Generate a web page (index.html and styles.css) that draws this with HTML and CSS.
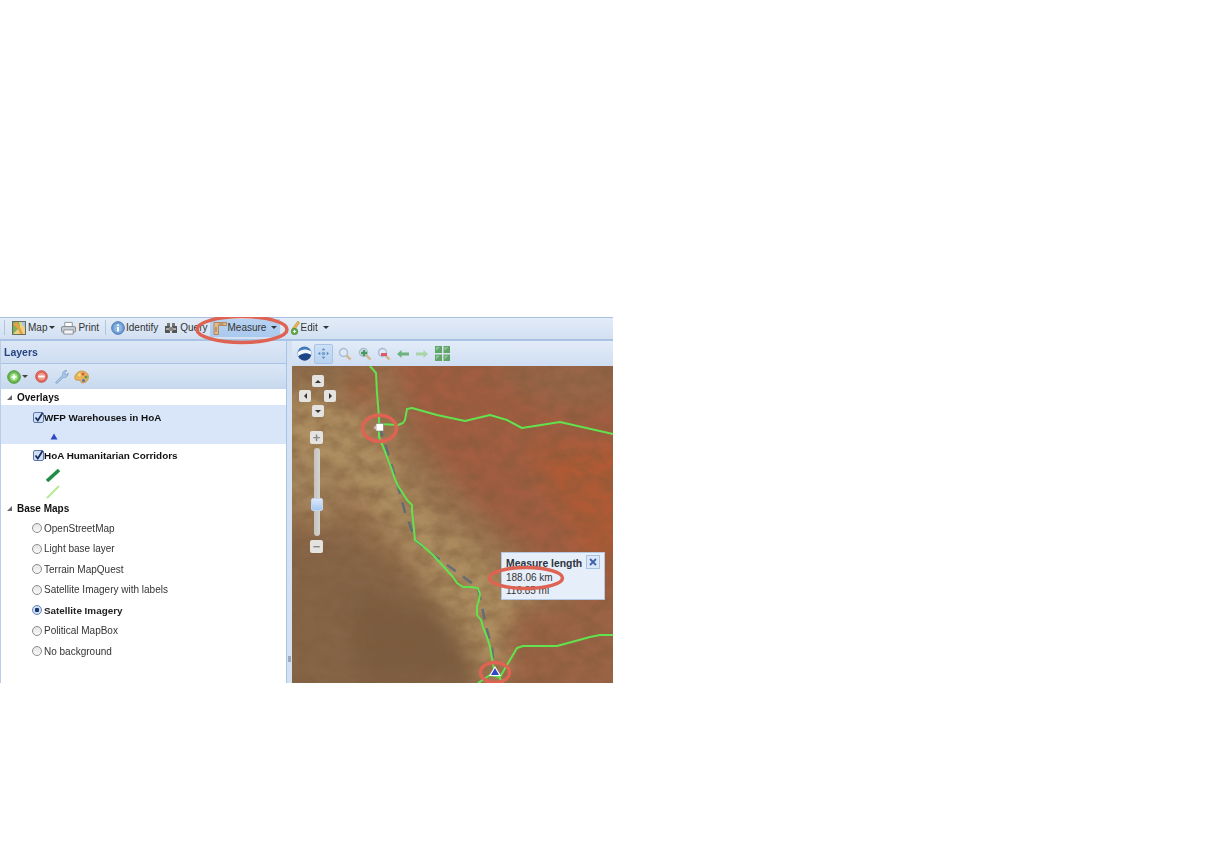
FILE: index.html
```html
<!DOCTYPE html>
<html lang="en">
<head>
<meta charset="utf-8">
<title>Measure length</title>
<link rel="stylesheet" href="styles.css">
</head>
<body>
<div class="app">
  <div class="toolbar">
    <span class="sep sep-a"></span>
    <div class="tb tb-map">
      <svg class="ic14" viewBox="0 0 14 14"><rect x=".5" y=".5" width="13" height="13" fill="#e8d28a" stroke="#6b6b5a"/><path d="M1 1l6 0 1 5-7 7z" fill="#7fb05a"/><path d="M1 3l5 5 2 5h3L8 6 5 1z" fill="#e8a040"/><path d="M9 1h4v6z" fill="#9cc4e8"/></svg>
      <span>Map</span><i class="caret"></i>
    </div>
    <div class="tb tb-print">
      <svg class="ic16" viewBox="0 0 16 14"><path d="M4 1h8v5H4z" fill="#fff" stroke="#8a9098"/><rect x=".5" y="5.500" width="15" height="6" rx="1.500" fill="#c9ced4" stroke="#7d838b"/><path d="M3 9h10v4.500H3z" fill="#f4f4f4" stroke="#8a9098"/></svg>
      <span>Print</span>
    </div>
    <span class="sep sep-b"></span>
    <div class="tb tb-identify">
      <svg class="ic14" viewBox="0 0 14 14"><circle cx="7" cy="7" r="6.300" fill="#6f9fd6" stroke="#4b76ad"/><circle cx="7" cy="7" r="4" fill="#8db8e6"/><path d="M6 3.500h2v1.500H6zM6 6h2v4.500H6z" fill="#fff"/></svg>
      <span>Identify</span>
    </div>
    <div class="tb tb-query">
      <svg class="ic14" viewBox="0 0 14 12"><path d="M3 1h3v3H3zM8 1h3v3H8z" fill="#777"/><path d="M1 4h5v7H1zM8 4h5v7H8z" fill="#555"/><rect x="5" y="5" width="4" height="4" fill="#888"/><path d="M2 6h3v2H2zM9 6h3v2H9z" fill="#aaa"/></svg>
      <span>Query</span>
    </div>
    <div class="tb tb-measure">
      <svg class="ic14" viewBox="0 0 14 14"><path d="M1 1.500h12.500v3H5.500v9H1z" fill="#e4b98a" stroke="#a57a4c" stroke-width=".8"/><path d="M5.500 3h5M3 6v5" stroke="#8b5f33" stroke-width=".8"/></svg>
      <span>Measure</span><i class="caret caret-split"></i>
    </div>
    <div class="tb tb-edit">
      <svg class="ic-edit" viewBox="0 0 10 15"><path d="M8 1L2 9l2 1.500L9.500 3z" fill="#e9b949" stroke="#b9862b" stroke-width=".6"/><circle cx="4.500" cy="11.500" r="3.200" fill="#68b04a" stroke="#3f8030" stroke-width=".7"/><path d="M3 11.500h3M4.500 10v3" stroke="#fff" stroke-width=".9"/></svg>
      <span>Edit</span><i class="caret caret-edit"></i>
    </div>
  </div>

  <div class="panes">
    <aside class="layers">
      <div class="layers-title">Layers</div>
      <div class="layers-tools">
        <svg class="ic-add" viewBox="0 0 14 14"><circle cx="7" cy="7" r="6.300" fill="#67b84f" stroke="#4f9a3b"/><circle cx="7" cy="7" r="3.800" fill="#a4dc8a"/><path d="M4.500 7h5M7 4.500v5" stroke="#fff" stroke-width="1.600"/></svg>
        <i class="caret caret-add"></i>
        <svg class="ic-remove" viewBox="0 0 14 14"><circle cx="7" cy="7" r="6.300" fill="#e4695c" stroke="#c9584c"/><circle cx="7" cy="7" r="3.800" fill="#f0a096"/><path d="M3.500 7h7" stroke="#fff" stroke-width="2"/></svg>
        <svg class="ic-wrench" viewBox="0 0 15 15"><path d="M1.500 13.500L8.500 6.200C8 3.500 10 1 13 1.500L10.800 3.700l.6 1.800 1.800.5L14 4c.5 3-2 5-4.700 4.500L3 14.500z" fill="#a9c5e8" stroke="#7d9cc4" stroke-width=".7"/></svg>
        <svg class="ic-palette" viewBox="0 0 15 14"><path d="M7.500 1C12 1 14.500 4 14.500 7S12 13 8.500 13c-2 0-1.500-2-2.500-2.500C4.500 10 1.500 11 .8 8.500.2 5.500 3.500 1 7.500 1z" fill="#e9b25c" stroke="#c28a3c" stroke-width=".7"/><circle cx="9" cy="4" r="1.500" fill="#d8573f"/><circle cx="12" cy="7" r="1.500" fill="#5d9a45"/><circle cx="9.500" cy="10.500" r="1.500" fill="#4a73b8"/><circle cx="5.500" cy="5" r="1.400" fill="#f4e27a"/></svg>
      </div>
      <div class="tree">
        <div class="group"><i class="twist"></i>Overlays</div>
        <div class="layer selected">
          <div class="row-check">
            <svg class="check" viewBox="0 0 11 11"><rect x=".5" y=".5" width="10" height="10" rx="1.500" fill="#cfe0f6" stroke="#5d7aa5"/><path d="M2.500 5.500l2.300 3L9.500 1" fill="none" stroke="#182c58" stroke-width="1.700"/></svg>
            <b>WFP Warehouses in HoA</b>
          </div>
          <div class="sym sym-tri"><svg viewBox="0 0 8 7" class="tri"><path d="M4 .5L7.500 6.500H.5z" fill="#2f47c4"/></svg></div>
        </div>
        <div class="layer layer-lines">
          <div class="row-check">
            <svg class="check" viewBox="0 0 11 11"><rect x=".5" y=".5" width="10" height="10" rx="1.500" fill="#cfe0f6" stroke="#5d7aa5"/><path d="M2.500 5.500l2.300 3L9.500 1" fill="none" stroke="#182c58" stroke-width="1.700"/></svg>
            <b>HoA Humanitarian Corridors</b>
          </div>
          <div class="sym"><svg viewBox="0 0 14 14" class="line"><path d="M1 13L13 2" stroke="#1f8d44" stroke-width="3.500"/></svg></div>
          <div class="sym"><svg viewBox="0 0 14 14" class="line"><path d="M1 13L13 1" stroke="#b4ea96" stroke-width="2"/></svg></div>
        </div>
        <div class="group group-base"><i class="twist"></i>Base Maps</div>
        <div class="radio"><i class="dot"></i>OpenStreetMap</div>
        <div class="radio"><i class="dot"></i>Light base layer</div>
        <div class="radio"><i class="dot"></i>Terrain MapQuest</div>
        <div class="radio"><i class="dot"></i>Satellite Imagery with labels</div>
        <div class="radio"><i class="dot on"></i><b>Satellite Imagery</b></div>
        <div class="radio"><i class="dot"></i>Political MapBox</div>
        <div class="radio"><i class="dot"></i>No background</div>
      </div>
    </aside>
    <div class="splitter"><i class="grip"></i></div>
    <section class="mapwrap">
      <div class="maptools">
        <svg class="m-globe" viewBox="0 0 16 16"><circle cx="8" cy="8" r="7.500" fill="#3f76bd"/><path d="M1 6.500C5 3 10 3 15 5.500 15.500 7 15.500 8 15 9.500 10 6.500 6 7.500 1.500 11 .7 9.500.7 8 1 6.500z" fill="#f2f6fb"/><path d="M1.500 11C6 7.500 10 7 15 9.500 14 13 11 15.500 8 15.500S3 13.500 1.500 11z" fill="#1f4585"/></svg>
        <div class="m-pan"><svg viewBox="0 0 14 14"><path d="M7 1l2 2.500H5zM7 13l2-2.500H5zM1 7l2.500-2v4zM13 7l-2.500-2v4z" fill="#5d8ac0"/><circle cx="7" cy="7" r="2" fill="#7ea6d4"/></svg></div>
        <svg class="m-ic" viewBox="0 0 14 14"><circle cx="5.500" cy="5.500" r="4" fill="#dfe9f5" stroke="#a9bcd3" stroke-width="1.400"/><path d="M8.500 8.500l4 4" stroke="#d2b48a" stroke-width="2.400"/></svg>
        <svg class="m-ic" viewBox="0 0 14 14"><circle cx="5.500" cy="5.500" r="4" fill="#dfe9f5" stroke="#a9bcd3" stroke-width="1.400"/><path d="M8.500 8.500l4 4" stroke="#d2b48a" stroke-width="2.400"/><path d="M3 6h6M6 3v6" stroke="#4a9a5a" stroke-width="2.400"/></svg>
        <svg class="m-ic" viewBox="0 0 14 14"><circle cx="5.500" cy="5.500" r="4" fill="#dfe9f5" stroke="#a9bcd3" stroke-width="1.400"/><path d="M8.500 8.500l4 4" stroke="#d2b48a" stroke-width="2.400"/><path d="M4 7.500h6" stroke="#e2566a" stroke-width="3"/></svg>
        <svg class="m-ic m-arrow" viewBox="0 0 14 10"><path d="M1 5l4.500-4v2.500H13v3H5.500V9z" fill="#6cb27a"/></svg>
        <svg class="m-ic m-arrow" viewBox="0 0 14 10"><path d="M13 5L8.500 1v2.500H1v3h7.500V9z" fill="#a8d4a8"/></svg>
        <svg class="m-grid" viewBox="0 0 15 15"><path d="M0 0h7v7H0zM8.500 0h6.500v7H8.500zM0 8.500h7V15H0zM8.500 8.500h6.500V15H8.500z" fill="#5fa56a"/><path d="M1 1h4L1 5zM9.500 1h4l-4 4zM1 9.500h4l-4 4zM9.500 9.500h4l-4 4z" fill="#8fc492"/></svg>
      </div>
      <div class="map">
        <svg class="terrain" viewBox="292 366 321 317" preserveAspectRatio="none">
          <defs>
            <filter id="soft" x="-20%" y="-20%" width="140%" height="140%"><feGaussianBlur stdDeviation="11"/></filter>
            <filter id="grain" x="0" y="0" width="100%" height="100%">
              <feTurbulence type="fractalNoise" baseFrequency=".06 .08" numOctaves="5" seed="7"/>
              <feColorMatrix values="0 0 0 0 .2  0 0 0 0 .1  0 0 0 0 .04  .9 0 0 0 -.27"/>
            </filter>
          </defs>
          <rect x="292" y="366" width="321" height="317" fill="#9a7350"/>
          <g filter="url(#soft)">
            <path d="M385 340H650V650L540 565 470 500 420 440z" fill="#a35d40"/>
            <path d="M530 450L640 440V570L590 560z" fill="#b05a36"/>
            <path d="M480 370L640 340V400L560 410z" fill="#98654a"/>
            <path d="M280 340H365V400L330 400 280 380z" fill="#906e4e"/>
            <path d="M350 372h22v34h-22z" fill="#a4623f"/>
            <path d="M300 385L370 420 420 500 525 590 565 650 505 700 440 600 400 540 330 470 270 440z" fill="#ad8e60"/>
            <path d="M270 530L350 530 440 600 480 700H270z" fill="#866547"/>
            <path d="M350 590L450 620 480 680H360z" fill="#7b5b40"/>
            <path d="M510 610L650 590V710H500z" fill="#9b6344"/>
            <path d="M270 430L335 480V520L270 500z" fill="#a3855d"/>
          </g>
          <rect x="292" y="366" width="321" height="317" filter="url(#grain)"/>
          <path class="measure-line" d="M379 426L387 450 397 483 405 512 410 525 415 540 433 555 457 572 478 588 482 607 487 630 492 647 494 670"/>
          <g class="road">
            <path d="M370 366L376 373 377 393 378 405 379 417 379 437 384 449 387 457 392 470 394 477 398 486 402 492 407 500 412 505 412 512 413 520 415 540 424 547 433 555 443 566 453 577 457 583 463 587 470 587 478 588 480 594 479 600 477 606 477 615 481 620 483 627 487 637 490 647 492 658 494 670 503 683"/>
            <path d="M379 424L398 425 403 423 405 420 407 409 412 408 437 415 465 421 490 415 507 420 522 428 560 422 613 434"/>
            <path d="M478 683L490 675 500 677 507 665 517 648 523 646 557 646 590 637 600 635 613 635"/>
          </g>
          <path d="M380 423l-5 3-1 2 2 2 4 0z" fill="#ddd" />
          <rect x="376" y="423.500" width="7.500" height="7.500" fill="#fff" stroke="#777" stroke-width=".6"/>
          <path d="M489 676L495 666 501 676z" fill="#fff"/>
          <path d="M491 675L495 668 499 675z" fill="#2f47c4"/>
        </svg>
        <div class="pan">
          <span class="zb"><i class="g-up"></i></span>
          <div class="pan-mid">
            <span class="zb"><i class="g-left"></i></span>
            <span class="zb"><i class="g-right"></i></span>
          </div>
          <span class="zb"><i class="g-down"></i></span>
        </div>
        <div class="zoom">
          <span class="zb zoom-btn">+</span>
          <div class="slider"><span class="thumb"></span></div>
          <span class="zb zoom-btn">&minus;</span>
        </div>
        <div class="popup">
          <div class="popup-title"><b>Measure length</b><span class="close"><svg viewBox="0 0 8 8"><path d="M1 1l6 6M7 1L1 7" stroke="#3f62a8" stroke-width="1.800"/></svg></span></div>
          <div class="popup-val">188.06 km</div>
          <div class="popup-val">116.85 mi</div>
        </div>
      </div>
    </section>
  </div>
  <svg class="marks" viewBox="0 317 613 366">
    <ellipse cx="242" cy="329.500" rx="45" ry="13"/>
    <ellipse cx="379.500" cy="428.300" rx="17" ry="13"/>
    <ellipse cx="526" cy="578" rx="36.500" ry="10.500"/>
    <ellipse cx="495" cy="672.500" rx="14.500" ry="10"/>
  </svg>
</div>
</body>
</html>
```
FILE: styles.css
```css
* { box-sizing: border-box; }
html, body { margin: 0; padding: 0; background: #fff; }
body { font-family: "Liberation Sans", Arial, sans-serif; font-size: 10px; color: #222; }

.app { position: relative; width: 613px; height: 366px; margin-top: 317px; display: flex; flex-direction: column; overflow: hidden; filter: blur(.45px); }

/* top toolbar */
.toolbar { height: 24px; flex: none; display: flex; align-items: center; padding-bottom: 2px; border-top: 1px solid #a8c0e0; border-bottom: 2px solid #a9c3e4; background: linear-gradient(#e3ecf8, #d2e0f2); color: #333; }
.tb { display: flex; align-items: center; height: 20px; }
.tb span { white-space: nowrap; }
.sep { width: 1px; height: 15px; background: #b3c6df; flex: none; }
.sep-a { margin-left: 4px; margin-right: 7px; }
.sep-b { margin-left: 6px; margin-right: 5px; }
.ic14 { width: 14px; height: 14px; flex: none; margin-right: 2px; }
.ic16 { width: 15px; height: 14px; flex: none; margin-right: 2px; }
.ic-edit { width: 10px; height: 15px; flex: none; margin-right: 1px; }
.caret { display: block; width: 0; height: 0; margin-left: 2px; border: 3px solid transparent; border-top-color: #333; border-bottom-width: 0; }
.tb-print { margin-left: 6px; }
.tb-identify .ic14 { margin-right: 1px; }
.tb-query { margin-left: 6px; }
.tb-measure { margin-left: 2px; width: 70px; padding-left: 3px; background: linear-gradient(#b8d3f1, #a9c9ee); height: 18px; }
.tb-measure .ic14 { margin-right: 1px; }
.tb-edit { margin-left: 10px; }
.caret-split { margin-left: 5px; }
.caret-edit { margin-left: 5px; }

/* panes */
.panes { flex: 1; display: flex; min-height: 0; }
.layers { width: 287px; flex: none; display: flex; flex-direction: column; border-left: 1px solid #b9cde8; border-right: 1px solid #a9c3e4; background: #fff; }
.layers-title { height: 23px; flex: none; padding-left: 3px; display: flex; align-items: center; font-size: 10.500px; font-weight: bold; color: #27457f; background: linear-gradient(#dce7f6, #cfdef2); border-bottom: 1px solid #a9c3e4; }
.layers-tools { height: 25px; flex: none; display: flex; align-items: center; padding-left: 6px; background: linear-gradient(#dbe7f6, #c7d8ee); }
.ic-add { width: 14px; height: 14px; }
.caret-add { margin-left: 1px; border-top-color: #444; }
.ic-remove { width: 13px; height: 13px; margin-left: 7px; }
.ic-wrench { width: 15px; height: 15px; margin-left: 6px; }
.ic-palette { width: 15px; height: 14px; margin-left: 5px; }

.tree { flex: 1; color: #222; }
.tree b { font-size: 9.900px; }
.group { height: 16px; display: flex; align-items: center; padding-left: 6px; font-weight: bold; color: #111; }
.twist { width: 0; height: 0; margin-right: 5px; border-style: solid; border-width: 0 0 5px 5px; border-color: transparent transparent #666 transparent; }
.layer { padding-left: 32px; }
.selected { background: #d9e6f9; }
.layer.selected { height: 39px; }
.row-check { height: 24px; display: flex; align-items: center; color: #111; }
.check { width: 11px; height: 11px; flex: none; }
.sym { display: flex; align-items: center; height: 17px; padding-left: 13px; }
.sym-tri { height: 15px; padding-left: 17px; }
.tri { width: 8px; height: 7px; }
.line { width: 14px; height: 14px; }
.layer-lines { height: 56px; }
.layer-lines .row-check { height: 22px; }
.group-base { height: 18px; padding-bottom: 2px; }
.radio { height: 20.500px; display: flex; align-items: center; padding-left: 31px; color: #333; }
.radio b { color: #222; }
.dot { width: 10px; height: 10px; flex: none; margin-right: 2px; border-radius: 50%; border: 1px solid #8d8d8d; background: linear-gradient(#e4e4e4, #fafafa); }
.dot.on { border-color: #6685b5; background: radial-gradient(circle, #1d3569 0 2px, #cddff6 2.500px); }

.splitter { width: 5px; flex: none; position: relative; background: #d3e1f3; }
.grip { position: absolute; left: 1px; top: 315px; width: 3px; height: 6px; background: #9aa9bd; }

/* map side */
.mapwrap { flex: 1; min-width: 0; display: flex; flex-direction: column; }
.maptools { height: 25px; flex: none; display: flex; align-items: center; padding-left: 5px; background: linear-gradient(#e3ecf8, #cfdef2); }
.m-globe { width: 15px; height: 15px; flex: none; }
.m-pan { width: 19px; height: 20px; margin-left: 2px; display: flex; align-items: center; justify-content: center; background: linear-gradient(#cde0f6, #b9d2f0); border: 1px solid #a9c3e4; border-radius: 2px; }
.m-pan svg { width: 13px; height: 13px; }
.m-ic { width: 14px; height: 14px; flex: none; margin-left: 5.300px; }
.m-arrow { height: 10px; }
.m-grid { width: 15px; height: 15px; flex: none; margin-left: 6px; }
.map { position: relative; flex: 1; min-height: 0; overflow: hidden; }
.terrain { display: block; width: 100%; height: 100%; }
.road path { fill: none; stroke: #62e24e; stroke-width: 2; stroke-linejoin: round; }
.measure-line { fill: none; stroke: #5d6a78; stroke-width: 2.500; stroke-dasharray: 11 9; opacity: .9; }

/* map controls */
.pan { position: absolute; left: 7px; top: 9px; width: 37px; display: flex; flex-direction: column; align-items: center; gap: 3px; }
.pan-mid { width: 100%; display: flex; justify-content: space-between; }
.zb { width: 12px; height: 12px; display: flex; align-items: center; justify-content: center; background: #e4e3e0; border-radius: 2px; color: #777; }
.g-up, .g-down, .g-left, .g-right { display: block; width: 0; height: 0; border-style: solid; border-color: transparent; }
.g-up { border-width: 0 3.500px 3px; border-bottom-color: #333; }
.g-down { border-width: 3px 3.500px 0; border-top-color: #333; }
.g-left { border-width: 3.500px 3px 3.500px 0; border-right-color: #333; }
.g-right { border-width: 3.500px 0 3.500px 3px; border-left-color: #333; }
.zoom { position: absolute; left: 18px; top: 65px; width: 13px; display: flex; flex-direction: column; align-items: center; gap: 4px; }
.zoom-btn { width: 13px; height: 13px; font-size: 13px; font-weight: bold; line-height: 13px; color: #888; }
.slider { position: relative; width: 6px; height: 88px; border-radius: 3px; background: linear-gradient(90deg, #c4c3bd, #d4d2cc); }
.thumb { position: absolute; left: -3px; top: 50px; width: 12px; height: 13px; border-radius: 2px; background: linear-gradient(#dbe8fa, #a9c8f0); border: 1px solid #c3d6ef; }

/* popup */
.popup { position: absolute; left: 209px; top: 186px; width: 104px; height: 48px; padding: 3px 4px 0; background: #e6eefa; border: 1px solid #b4c8e2; color: #333; }
.popup-title { display: flex; justify-content: space-between; align-items: center; height: 14px; font-size: 10.400px; color: #2c3440; }
.close { width: 14px; height: 14px; margin-top: -2px; display: flex; align-items: center; justify-content: center; background: #dbe7f8; border: 1px solid #a9c3e4; }
.close svg { width: 8px; height: 8px; }
.popup-val { height: 13px; line-height: 13px; margin-top: 1px; }
.popup-val + .popup-val { margin-top: 0; }

/* hand-drawn annotation marks */
.marks { position: absolute; left: 0; top: 0; width: 613px; height: 366px; pointer-events: none; }
.marks ellipse { fill: none; stroke: #df6353; stroke-width: 3.500; }
```
